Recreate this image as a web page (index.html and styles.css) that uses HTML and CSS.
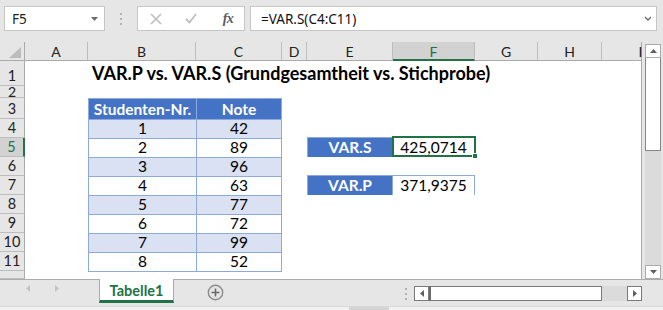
FILE: index.html
```html
<!DOCTYPE html>
<html>
<head>
<meta charset="utf-8">
<link rel="stylesheet" href="styles.css">
</head>
<body>
<div class="app">
  <div class="fbar">
    <div class="namebox"><span>F5</span><svg width="7" height="4" viewBox="0 0 7 4"><path d="M0 0H7L3.5 4Z" fill="#6d6d6d"/></svg></div>
    <div class="grip"><i></i><i></i><i></i></div>
    <div class="fbtns">
      <span class="fb"><svg width="12" height="12" viewBox="0 0 12 12"><path d="M1 1L11 11M11 1L1 11" stroke="#bdbdbd" stroke-width="1.6"/></svg></span>
      <span class="fb"><svg width="12" height="11" viewBox="0 0 12 11"><path d="M1 6L4.5 9.5L11 1" stroke="#bdbdbd" stroke-width="1.8" fill="none"/></svg></span>
      <span class="fb fx">fx</span>
    </div>
    <div class="finput"><span>=VAR.S(C4:C11)</span><svg width="8" height="5" viewBox="0 0 8 5"><path d="M1 1L4 4L7 1" stroke="#6d6d6d" stroke-width="1.4" fill="none"/></svg></div>
  </div>

  <div class="main">
    <div class="sheet">
      <div class="corner"><svg width="24" height="18" viewBox="0 0 24 18"><path d="M21 5V16H9Z" fill="#bcbcbc"/></svg></div>
      <div class="ch">A</div>
      <div class="ch">B</div>
      <div class="ch">C</div>
      <div class="ch">D</div>
      <div class="ch">E</div>
      <div class="ch sel">F</div>
      <div class="ch">G</div>
      <div class="ch">H</div>
      <div class="ch last">I</div>

      <div class="rh">1</div>
      <div class="rh r2">2</div>
      <div class="rh">3</div>
      <div class="rh">4</div>
      <div class="rh sel">5</div>
      <div class="rh">6</div>
      <div class="rh">7</div>
      <div class="rh">8</div>
      <div class="rh">9</div>
      <div class="rh">10</div>
      <div class="rh">11</div>
      <div class="rh"></div>

      <div class="cells"></div>

      <div class="title">VAR.P vs. VAR.S (Grundgesamtheit vs. Stichprobe)</div>

      <div class="tbl">
        <div class="th">Studenten-Nr.</div><div class="th">Note</div>
        <div class="td alt">1</div><div class="td alt">42</div>
        <div class="td">2</div><div class="td">89</div>
        <div class="td alt">3</div><div class="td alt">96</div>
        <div class="td">4</div><div class="td">63</div>
        <div class="td alt">5</div><div class="td alt">77</div>
        <div class="td">6</div><div class="td">72</div>
        <div class="td alt">7</div><div class="td alt">99</div>
        <div class="td">8</div><div class="td">52</div>
      </div>

      <div class="kv kv-s">
        <div class="kl">VAR.S</div>
        <div class="kval active">425,0714<span class="selbox"></span><span class="handle"></span></div>
      </div>
      <div class="kv kv-p">
        <div class="kl">VAR.P</div>
        <div class="kval">371,9375</div>
      </div>
    </div>

    <div class="vscroll">
      <div class="sbtn"><svg width="7" height="4" viewBox="0 0 7 4"><path d="M0 4H7L3.5 0Z" fill="#5f5f5f"/></svg></div>
      <div class="vthumb"></div>
      <div class="vtrack"></div>
      <div class="sbtn"><svg width="7" height="4" viewBox="0 0 7 4"><path d="M0 0H7L3.5 4Z" fill="#5f5f5f"/></svg></div>
    </div>
  </div>

  <div class="tabbar">
    <div class="tabnav">
      <svg width="4" height="7" viewBox="0 0 4 7"><path d="M4 0V7L0 3.5Z" fill="#c3c3c3"/></svg>
      <svg width="4" height="7" viewBox="0 0 4 7"><path d="M0 0V7L4 3.5Z" fill="#c3c3c3"/></svg>
    </div>
    <div class="tab">Tabelle1</div>
    <div class="addsheet"><svg width="17" height="17" viewBox="0 0 17 17"><circle cx="8.5" cy="8.5" r="7.2" fill="none" stroke="#8c8c8c" stroke-width="1.4"/><path d="M8.5 4.5V12.5M4.5 8.5H12.5" stroke="#6a6a6a" stroke-width="1.6"/></svg></div>
    <div class="spacer"></div>
    <div class="hgrip"><i></i><i></i><i></i></div>
    <div class="hscroll">
      <div class="hbtn"><svg width="4" height="7" viewBox="0 0 4 7"><path d="M4 0V7L0 3.5Z" fill="#5f5f5f"/></svg></div>
      <div class="hthumb"></div>
      <div class="htrack"></div>
      <div class="hbtn"><svg width="4" height="7" viewBox="0 0 4 7"><path d="M0 0V7L4 3.5Z" fill="#5f5f5f"/></svg></div>
    </div>
  </div>
  <div class="status"><div class="sblock"></div></div>
</div>
</body>
</html>
```

FILE: styles.css
```css
* { box-sizing: border-box; }
body { margin: 0; background: #e6e6e6; }

.app {
  width: 663px;
  height: 310px;
  background: #e6e6e6;
  overflow: hidden;
  display: flex;
  flex-direction: column;
  font-family: "Lato", "Noto Sans", sans-serif;
}

/* formula bar */
.fbar {
  height: 42px;
  flex: none;
  display: flex;
  align-items: flex-start;
  padding: 6px 0 0 4px;
}
.namebox {
  width: 101px;
  height: 25px;
  background: #fff;
  border: 1px solid #c6c6c6;
  display: flex;
  align-items: center;
  justify-content: space-between;
  padding: 0 6px 0 7px;
  font: 13.5px "Noto Sans", sans-serif;
  color: #222;
}
.grip {
  width: 32px;
  height: 25px;
  display: flex;
  flex-direction: column;
  align-items: center;
  justify-content: center;
  gap: 3px;
}
.grip i, .hgrip i {
  display: block;
  width: 2px;
  height: 2px;
  background: #b3b3b3;
}
.fbtns {
  width: 108px;
  height: 25px;
  background: #fff;
  border: 1px solid #c6c6c6;
  display: grid;
  grid-template-columns: 35px 35px 36px;
  align-items: center;
  justify-items: center;
}
.fx {
  font: italic bold 14px "Liberation Serif", serif;
  color: #5c5c5c;
  letter-spacing: -0.5px;
  margin-left: 4px;
}
.fb { display: flex; align-items: center; justify-content: center; }
.finput {
  margin-left: 5px;
  width: 407px;
  height: 25px;
  background: #fff;
  border: 1px solid #c6c6c6;
  display: flex;
  align-items: center;
  justify-content: space-between;
  padding: 0 4px 0 10px;
  font: 13.5px "Noto Sans", sans-serif;
  color: #111;
}

/* sheet */
.main {
  height: 237px;
  flex: none;
  display: flex;
}
.sheet {
  width: 642px;
  height: 237px;
  display: grid;
  grid-template-columns: 25px 63px 108px 86px 25px 86px 82px 63px 64px 39px;
  grid-template-rows: 19px 25px 12px 21px repeat(8, 19px) 8px;
  border-right: 1px solid #ababab;
}
.corner {
  grid-column: 1;
  grid-row: 1;
  border-right: 1px solid #ababab;
  border-bottom: 1px solid #ababab;
  background: #e6e6e6;
}
.corner svg { display: block; }
.ch {
  grid-row: 1;
  background: #e6e6e6;
  border-right: 1px solid #bdbdbd;
  border-bottom: 1px solid #ababab;
  display: flex;
  align-items: center;
  justify-content: center;
  font-size: 14px;
  color: #222;
  padding-top: 1px;
}
.ch.last { border-right: none; padding-left: 38px; }
.ch.sel {
  background: #d2d2d2;
  border-bottom: 2px solid #217346;
  color: #217346;
  padding-top: 2px;
}
.rh {
  grid-column: 1;
  background: #e6e6e6;
  border-right: 1px solid #ababab;
  border-bottom: 1px solid #bdbdbd;
  display: flex;
  align-items: flex-end;
  justify-content: center;
  font-size: 14.5px;
  line-height: 16px;
  color: #222;
  padding-bottom: 1px;
  overflow: hidden;
}
.rh.r2 {
  align-items: flex-start;
  line-height: 11px;
  padding: 0;
  font-size: 14px;
}
.rh.sel {
  background: #d2d2d2;
  border-right: 2px solid #217346;
  color: #217346;
}
.cells {
  grid-column: 2 / -1;
  grid-row: 2 / -1;
  background: #fff;
}
.title {
  grid-column: 3 / 9;
  grid-row: 2;
  align-self: end;
  padding: 0 0 2px 4px;
  font-weight: bold;
  font-size: 18px;
  line-height: 22px;
  color: #000;
  white-space: nowrap;
}

.tbl {
  grid-column: 3 / 5;
  grid-row: 4 / 13;
  align-self: start;
  height: 174px;
  display: grid;
  grid-template-columns: 107px 84px;
  grid-template-rows: 20px repeat(8, 18px);
  gap: 1px;
  background: #8ea9db;
  border: 1px solid #8ea9db;
}
.th, .td, .kl, .kval {
  display: flex;
  align-items: flex-end;
  justify-content: center;
  font-size: 15.5px;
  line-height: 18px;
  padding-bottom: 1px;
  color: #000;
}
.th {
  background: #4472c4;
  color: #fff;
  font-weight: bold;
}
.td { background: #fff; }
.td.alt { background: #d9e1f2; }

.kv {
  grid-column: 6 / 8;
  align-self: start;
  height: 20px;
  display: grid;
  grid-template-columns: 84px 81px;
  gap: 1px;
  background: #8ea9db;
  border: 1px solid #8ea9db;
}
.kv-s { grid-row: 6; margin-top: -1px; }
.kv-p { grid-row: 8; margin-top: -1px; }
.kl {
  background: #4472c4;
  color: #fff;
  font-weight: bold;
}
.kval { background: #fff; }
.kval.active { position: relative; }
.selbox {
  position: absolute;
  left: -1px;
  top: -2px;
  width: 84px;
  height: 21px;
  border: 2px solid #217346;
}
.handle {
  position: absolute;
  left: 79px;
  top: 15px;
  width: 6px;
  height: 6px;
  background: #217346;
  border: 1px solid #fff;
}

/* vertical scrollbar */
.vscroll {
  margin: 2px 0 0 3px;
  width: 16px;
  height: 235px;
  display: flex;
  flex-direction: column;
  background: #dbdbdb;
}
.sbtn {
  height: 14px;
  flex: none;
  background: #fff;
  border: 1px solid #ababab;
  display: flex;
  align-items: center;
  justify-content: center;
}
.vthumb {
  height: 93px;
  flex: none;
  background: #fff;
  border: 1px solid #868686;
  border-top: none;
}
.vtrack { flex: 1; }

/* tab bar */
.tabbar {
  height: 24px;
  flex: none;
  border-top: 1px solid #ababab;
  display: flex;
  align-items: flex-start;
}
.tabnav {
  width: 99px;
  height: 23px;
  display: flex;
  align-items: center;
  padding-left: 26px;
  gap: 25px;
}
.tabnav svg { display: block; margin-top: -6px; }
.tab {
  width: 75px;
  height: 24px;
  margin-top: -1px;
  background: #fff;
  border-left: 1px solid #ababab;
  border-right: 1px solid #ababab;
  border-bottom: 3px solid #217346;
  display: flex;
  align-items: center;
  justify-content: center;
  font-weight: bold;
  font-size: 14.5px;
  color: #217346;
  padding-top: 1px;
}
.addsheet {
  margin: 4px 0 0 33px;
  width: 17px;
  height: 17px;
}
.addsheet svg { display: block; }
.spacer { flex: 1; }
.hgrip {
  width: 16px;
  height: 23px;
  display: flex;
  flex-direction: column;
  align-items: center;
  padding-top: 8px;
  gap: 3px;
}
.hscroll {
  margin: 6px 21px 0 0;
  width: 228px;
  height: 15px;
  display: flex;
  background: #dbdbdb;
}
.hbtn {
  width: 15px;
  flex: none;
  background: #fff;
  border: 1px solid #7a7a7a;
  display: flex;
  align-items: center;
  justify-content: center;
}
.hthumb {
  width: 173px;
  flex: none;
  background: #fff;
  border: 1px solid #7a7a7a;
  border-left: 2px solid #6a6a6a;
}
.htrack { flex: 1; }
.status {
  flex: 1;
  border-top: 1px solid #d8d8d8;
  background: #f2f2f2;
  margin-top: 3px;
}
.sblock {
  margin-left: 349px;
  width: 40px;
  height: 3px;
  background: #d4d4d4;
}
```
